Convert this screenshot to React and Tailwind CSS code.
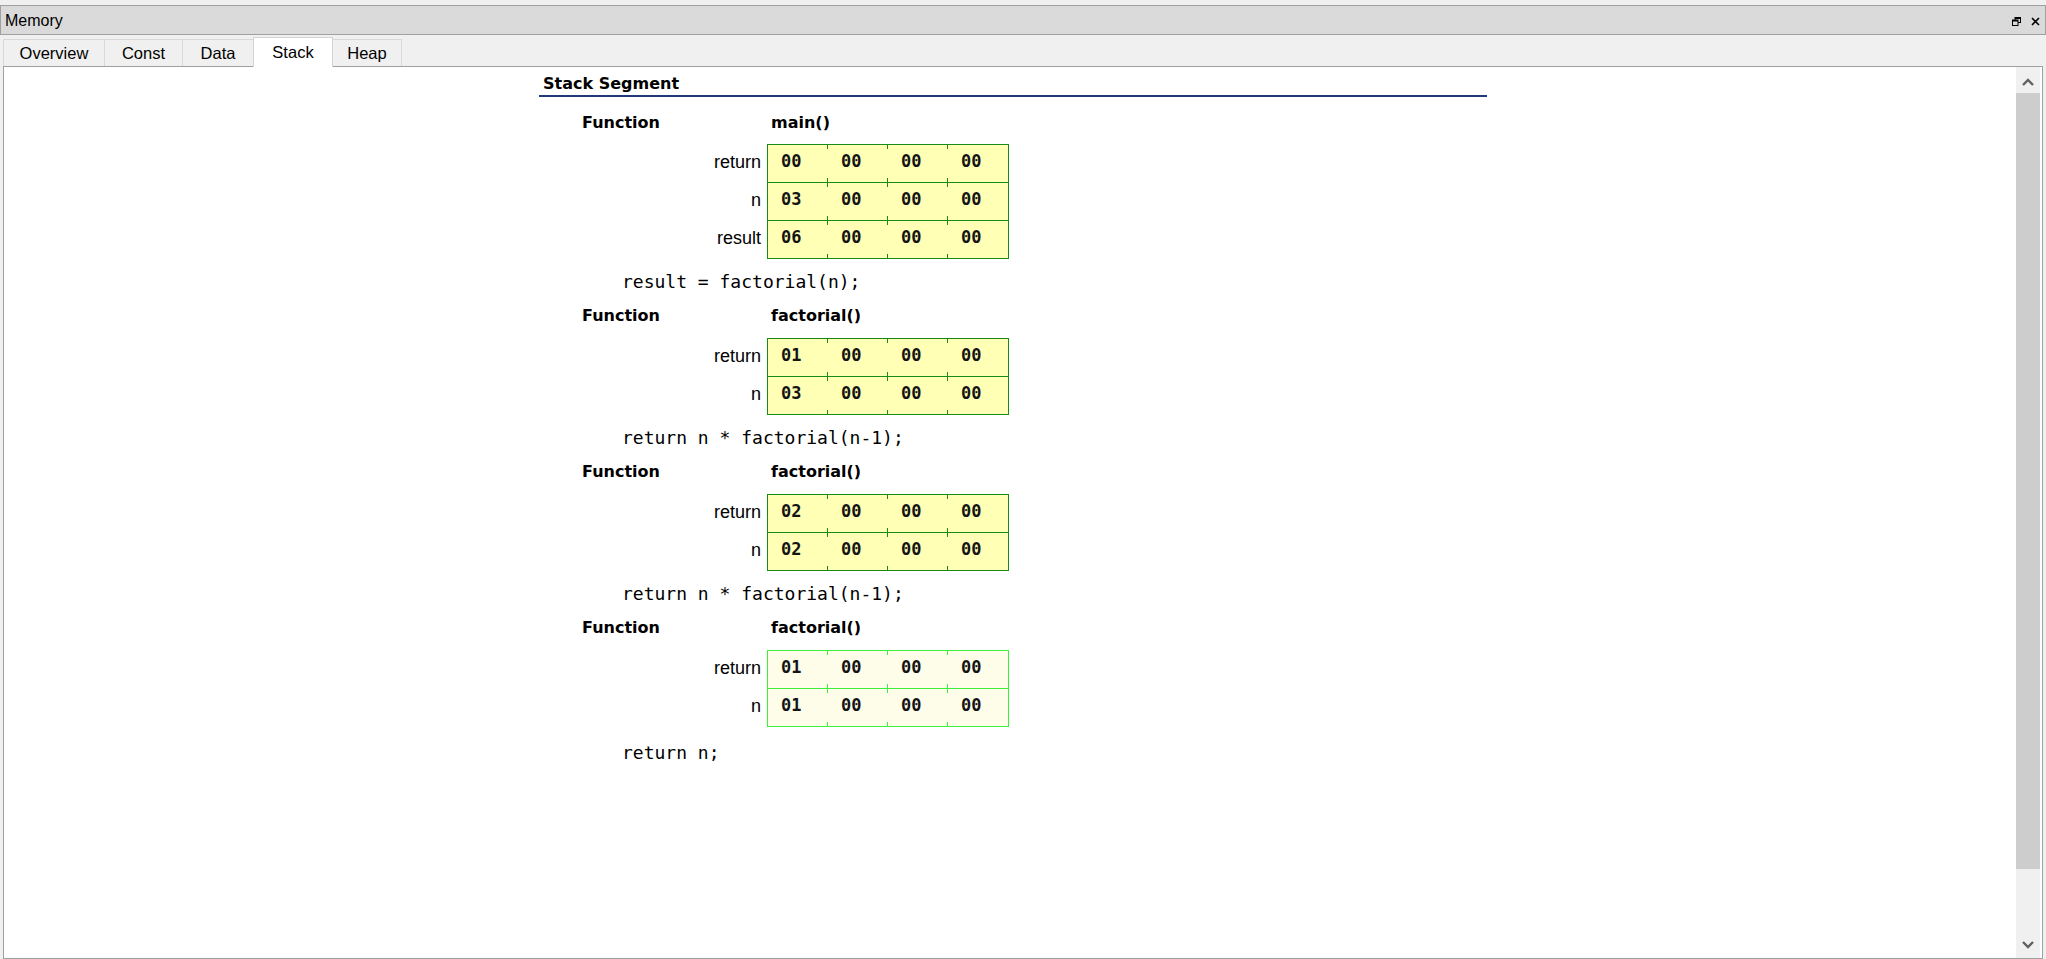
import React from "react";

const frames = [
  {
    name: "main()",
    rows: [
      { label: "return", vals: ["00", "00", "00", "00"] },
      { label: "n", vals: ["03", "00", "00", "00"] },
      { label: "result", vals: ["06", "00", "00", "00"] },
    ],
    code: "result = factorial(n);",
    active: false,
  },
  {
    name: "factorial()",
    rows: [
      { label: "return", vals: ["01", "00", "00", "00"] },
      { label: "n", vals: ["03", "00", "00", "00"] },
    ],
    code: "return n * factorial(n-1);",
    active: false,
  },
  {
    name: "factorial()",
    rows: [
      { label: "return", vals: ["02", "00", "00", "00"] },
      { label: "n", vals: ["02", "00", "00", "00"] },
    ],
    code: "return n * factorial(n-1);",
    active: false,
  },
  {
    name: "factorial()",
    rows: [
      { label: "return", vals: ["01", "00", "00", "00"] },
      { label: "n", vals: ["01", "00", "00", "00"] },
    ],
    code: "return n;",
    active: true,
  },
];

const uiFont = { fontFamily: '"Liberation Sans", Arial, sans-serif' };
const boldFont = { fontFamily: '"DejaVu Sans", Verdana, sans-serif' };
const monoFont = { fontFamily: '"DejaVu Sans Mono", monospace' };

function Cell({ value, first, active }) {
  const tick = active ? "bg-[#3cf03c]" : "bg-[#168c16]";
  return (
    <div className="relative w-[60px] h-full pl-[13px] pt-[6px]">
      {!first && (
        <>
          <span className={`absolute left-[-1px] top-0 w-px h-[4px] ${tick}`} />
          <span className={`absolute left-[-1px] bottom-0 w-px h-[4px] ${tick}`} />
        </>
      )}
      <span
        className="block text-[17px] leading-[20px] font-bold text-[#141414]"
        style={monoFont}
      >
        {value}
      </span>
    </div>
  );
}

function Frame({ frame, index, last }) {
  const border = frame.active ? "border-[#3cf03c]" : "border-[#168c16]";
  const fill = frame.active ? "bg-[#fdfdea]" : "bg-[#ffffb6]";
  return (
    <div className="flex flex-col">
      <div
        className={`flex pl-[43px] h-[20px] leading-[20px] text-[16px] font-bold text-black ${
          index === 0 ? "mt-[16px]" : "mt-[13px]"
        }`}
        style={boldFont}
      >
        <span className="w-[189px]">Function</span>
        <span>{frame.name}</span>
      </div>
      <div className={`flex ${index === 0 ? "mt-[11px]" : "mt-[12px]"}`}>
        <div className="w-[222px] flex flex-col">
          {frame.rows.map((r, i) => (
            <div
              key={i}
              className="h-[38px] pb-[1px] flex items-center justify-end text-[18px] text-black"
              style={uiFont}
            >
              {r.label}
            </div>
          ))}
        </div>
        <div className={`ml-[6px] w-[242px] border ${border} ${fill} flex flex-col`}>
          {frame.rows.map((r, i) => (
            <div
              key={i}
              className={`flex ${i > 0 ? `h-[38px] border-t ${border}` : "h-[37px]"}`}
            >
              {r.vals.map((v, j) => (
                <Cell key={j} value={v} first={j === 0} active={frame.active} />
              ))}
            </div>
          ))}
        </div>
      </div>
      <div
        className={`pl-[83px] h-[22px] leading-[22px] text-[18px] text-black whitespace-pre ${
          last ? "mt-[15px]" : "mt-[12px]"
        }`}
        style={monoFont}
      >
        {frame.code}
      </div>
    </div>
  );
}

function Chevron({ up }) {
  return (
    <svg width="12" height="8" viewBox="0 0 12 8">
      <path
        d={up ? "M1 7 L6 2 L11 7" : "M1 1 L6 6 L11 1"}
        fill="none"
        stroke="#606060"
        strokeWidth="2.4"
      />
    </svg>
  );
}

const tabs = [
  { label: "Overview", w: "w-[101px]" },
  { label: "Const", w: "w-[78px]" },
  { label: "Data", w: "w-[71px]" },
  { label: "Stack", w: "w-[80px]", active: true },
  { label: "Heap", w: "w-[69px]", noLeft: true },
];

export default function App() {
  return (
    <div className="w-[2046px] h-[959px] bg-[#f0f0f0] pt-[5px] flex flex-col overflow-hidden" style={uiFont}>
      {/* title bar */}
      <div className="h-[30px] shrink-0 border border-[#a0a0a0] bg-[#dadada] flex items-center justify-between pl-[4px] pr-[5px]">
        <span className="text-[16px] text-black leading-none pt-[2px]">Memory</span>
        <div className="flex items-center gap-[10px] pt-[2px]">
          <svg width="9" height="9" viewBox="0 0 9 9">
            <rect x="3" y="0.5" width="5.5" height="5" fill="none" stroke="#000" strokeWidth="1" />
            <rect x="3" y="0.5" width="5.5" height="1.5" fill="#000" />
            <rect x="0.5" y="3" width="5.5" height="5.5" fill="#dadada" stroke="#000" strokeWidth="1" />
            <rect x="0.5" y="3" width="5.5" height="1.5" fill="#000" />
          </svg>
          <svg width="9" height="9" viewBox="0 0 9 9">
            <path d="M1 1 L8 8 M8 1 L1 8" stroke="#000" strokeWidth="1.6" />
          </svg>
        </div>
      </div>

      {/* tabs */}
      <div className="h-[31px] shrink-0 flex items-end pl-[3px]">
        {tabs.map((t, i) =>
          t.active ? (
            <div
              key={i}
              className={`${t.w} h-[30px] -mb-px relative z-10 bg-white border border-b-0 border-[#d4d4d4] flex items-center justify-center pb-[1px] text-[16.5px] text-black`}
            >
              {t.label}
            </div>
          ) : (
            <div
              key={i}
              className={`${t.w} h-[27px] bg-[#f0f0f0] border-t ${t.noLeft ? "" : "border-l"} ${
                i === tabs.length - 1 ? "border-r" : ""
              } border-[#d9d9d9] flex items-center justify-center text-[16.5px] text-[#000]`}
            >
              {t.label}
            </div>
          )
        )}
      </div>

      {/* panel */}
      <div className="flex-1 min-h-0 mx-[3px] border border-[#a0a0a0] bg-white flex">
        <div className="flex-1 min-w-0 pl-[535px]">
          <div className="w-[948px] flex flex-col">
            <div
              className="pt-[7px] pl-[4px] h-[30px] leading-[20px] text-[16px] font-bold text-black border-b-2 border-[#233a7a]"
              style={boldFont}
            >
              Stack Segment
            </div>
            {frames.map((f, i) => (
              <Frame key={i} frame={f} index={i} last={i === frames.length - 1} />
            ))}
          </div>
        </div>
        <div className="w-[24px] mr-[2px] bg-[#f0f0f0] flex flex-col">
          <div className="h-[26px] flex items-center justify-center pt-[4px]">
            <Chevron up />
          </div>
          <div className="h-[776px] bg-[#cdcdcd]" />
          <div className="flex-1" />
          <div className="h-[26px] flex items-center justify-center">
            <Chevron />
          </div>
        </div>
      </div>
    </div>
  );
}
